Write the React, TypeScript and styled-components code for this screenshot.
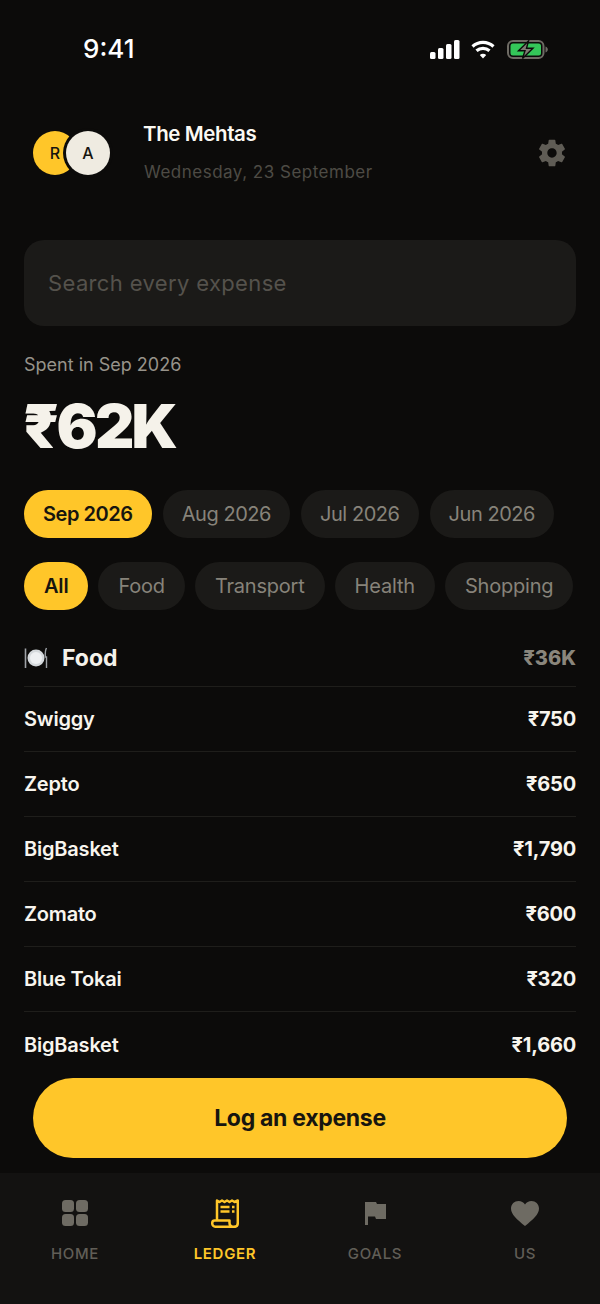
import React from "react";
import styled, { createGlobalStyle } from "styled-components";

const Global = createGlobalStyle`
  html, body { margin: 0; padding: 0; background: #0c0b0a; }
  * { box-sizing: border-box; }
`;

const Screen = styled.div`
  position: relative;
  width: 600px;
  height: 1304px;
  overflow: hidden;
  background: #0c0b0a;
  color: #f5f2ea;
  font-family: Inter, "Liberation Sans", sans-serif;
  display: flex;
  flex-direction: column;
`;

const StatusBar = styled.div`
  height: 96px;
  flex: none;
  display: flex;
  justify-content: space-between;
  padding: 34px 52px 0 83px;
`;

const Clock = styled.div`
  font-size: 26px;
  line-height: 30px;
  font-weight: 500;
  color: #fff;
`;

const StatusIcons = styled.div`
  display: flex;
  align-items: center;
  height: 30px;
`;

const Header = styled.header`
  flex: none;
  height: 114px;
  padding: 24px 32px 0 33px;
  display: flex;
  align-items: flex-start;
`;

const Avatars = styled.div`
  display: flex;
  width: 77px;
  padding-top: 11px;
  margin-right: 34px;
`;

const Avatar = styled.div<{ $bg: string; $over?: boolean }>`
  width: 44px;
  height: 44px;
  border-radius: 50%;
  background: ${(p) => p.$bg};
  color: #17150f;
  font-size: 16px;
  font-weight: 500;
  display: flex;
  align-items: center;
  justify-content: center;
  ${(p) => (p.$over ? "margin-left: -11px; box-shadow: 0 0 0 3px #0c0b0a; position: relative;" : "")}
`;

const Who = styled.div`
  flex: 1;
`;

const Name = styled.div`
  font-size: 20.5px;
  line-height: 28px;
  font-weight: 600;
  letter-spacing: -0.4px;
  color: #fbf9f3;
  margin-left: -1px;
`;

const DateLine = styled.div`
  margin-top: 12px;
  font-size: 17px;
  line-height: 24px;
  letter-spacing: 0.5px;
  color: #4e4b45;
`;

const Gear = styled.div`
  padding-top: 16.5px;
`;

const Body = styled.main`
  flex: 1;
  min-height: 0;
  padding: 0 24px;
  overflow: hidden;
`;

const Search = styled.div`
  margin-top: 30px;
  height: 86px;
  border-radius: 20px;
  background: #1b1a18;
  display: flex;
  align-items: center;
  padding: 0 24px;
  font-size: 22px;
  letter-spacing: 0.36px;
  color: #55524c;
`;

const SpentLabel = styled.div`
  margin-top: 26px;
  font-size: 18px;
  line-height: 26px;
  color: #97938a;
`;

const Total = styled.div`
  margin: 12px 0 0 -1px;
  font-size: 61px;
  line-height: 72px;
  font-weight: 900;
  letter-spacing: -2.8px;
  color: #f5f2ea;
`;

const Chips = styled.div<{ $gap: number }>`
  display: flex;
  gap: ${(p) => p.$gap}px;
  margin-top: 28px;
  & + & {
    margin-top: 24px;
  }
`;

const Chip = styled.div<{ $active?: boolean }>`
  flex: none;
  height: 48px;
  padding: 0 19px;
  border-radius: 24px;
  display: flex;
  align-items: center;
  font-size: 20px;
  font-weight: ${(p) => (p.$active ? 600 : 400)};
  letter-spacing: -0.45px;
  background: ${(p) => (p.$active ? "#ffc629" : "#1b1a18")};
  color: ${(p) => (p.$active ? "#17150f" : "#87837a")};
`;

const CategoryChip = styled(Chip)`
  padding: 0 20px;
  letter-spacing: -0.2px;
`;

const Section = styled.div`
  margin-top: 20px;
  height: 57px;
  display: flex;
  align-items: center;
  justify-content: space-between;
  border-bottom: 1px solid #1f1e1b;
`;

const SectionName = styled.div`
  display: flex;
  align-items: center;
  gap: 14px;
  font-size: 23px;
  font-weight: 700;
`;

const SectionTotal = styled.div`
  font-size: 20px;
  font-weight: 800;
  color: #8a867c;
`;

const Row = styled.div`
  height: 65px;
  display: flex;
  align-items: center;
  justify-content: space-between;
  border-bottom: 1px solid #1f1e1b;
  font-size: 20px;
  font-weight: 600;
  letter-spacing: -0.2px;
  color: #f8f5ee;
  &:last-child {
    border-bottom: 0;
  }
`;

const Amount = styled.div`
  font-weight: 700;
`;

const Cta = styled.button`
  position: absolute;
  left: 33px;
  top: 1078px;
  width: 534px;
  height: 80px;
  border: 0;
  border-radius: 40px;
  background: #ffc629;
  color: #17150f;
  font-family: inherit;
  font-size: 23px;
  font-weight: 700;
  letter-spacing: -0.3px;
`;

const Tabs = styled.nav`
  flex: none;
  height: 131px;
  background: #131211;
  display: grid;
  grid-template-columns: repeat(4, 150px);
  position: relative;
`;

const Tab = styled.div<{ $active?: boolean }>`
  display: flex;
  flex-direction: column;
  align-items: center;
  padding-top: 25px;
  gap: 16px;
  font-size: 15px;
  line-height: 20px;
  font-weight: ${(p) => (p.$active ? 600 : 500)};
  letter-spacing: 0.7px;
  color: ${(p) => (p.$active ? "#ffc629" : "#615e57")};
`;

const TabIcon = styled.div`
  height: 30px;
  display: flex;
  align-items: center;
  justify-content: center;
`;

const SignalIcon = () => (
  <svg width="30" height="19" viewBox="0 0 30 19" fill="#fff">
    <rect x="0" y="12" width="5.5" height="7" rx="1.5" />
    <rect x="8" y="8" width="5.5" height="11" rx="1.5" />
    <rect x="16" y="4" width="5.5" height="15" rx="1.5" />
    <rect x="24" y="0" width="5.5" height="19" rx="1.5" />
  </svg>
);

const WifiIcon = () => (
  <svg width="24" height="19" viewBox="0 0 24 19" fill="none" stroke="#fff" strokeWidth="3.2" style={{ margin: "0 12px 0 11px" }}>
    <path d="M1.5 6.5C7.5 1 16.5 1 22.5 6.5" />
    <path d="M5.5 10.8C9.2 7.5 14.8 7.5 18.5 10.8" />
    <path d="M12 18.5 8.8 15c1.9-1.6 4.500-1.600 6.400 0Z" fill="#fff" stroke="none" />
  </svg>
);

const BatteryIcon = () => (
  <svg width="41" height="19" viewBox="0 0 41 19" fill="none">
    <rect x="1" y="1" width="35.500" height="17" rx="5" stroke="#6e6b64" strokeWidth="2" />
    <rect x="3.500" y="3.500" width="30.500" height="12" rx="2.500" fill="#34c759" />
    <path d="M38.500 6.500v6c1.500-.5 2.300-1.700 2.300-3s-.8-2.500-2.300-3Z" fill="#6e6b64" />
    <path d="M21.500 1 11.500 10.800h6.500L15.500 18.500 26 8.200h-6.500Z" fill="#7d7a72" stroke="#0c0b0a" strokeWidth="1.400" />
  </svg>
);

const GearIcon = () => (
  <svg width="32" height="32" viewBox="0 0 24 24" fill="#5f5c55">
    <path d="M19.43 12.98c.04-.32.07-.64.07-.98s-.03-.66-.07-.98l2.110-1.650c.19-.15.24-.42.12-.64l-2-3.460c-.12-.22-.39-.3-.61-.22l-2.490 1c-.52-.4-1.080-.73-1.690-.98l-.38-2.650A.488.488 0 0 0 14 2h-4c-.25 0-.46.18-.49.42l-.38 2.650c-.61.25-1.170.59-1.690.98l-2.490-1c-.23-.09-.49 0-.61.22l-2 3.460c-.13.22-.07.49.12.64l2.110 1.650c-.04.32-.07.65-.07.98s.03.66.07.98l-2.110 1.650c-.19.15-.24.42-.12.64l2 3.460c.12.22.39.3.61.22l2.490-1c.52.4 1.080.73 1.690.98l.38 2.650c.03.24.24.42.49.42h4c.25 0 .46-.18.49-.42l.38-2.650c.61-.25 1.170-.59 1.690-.98l2.490 1c.23.09.49 0 .61-.22l2-3.460c.12-.22.07-.49-.12-.64l-2.110-1.650ZM12 15.500c-1.930 0-3.500-1.570-3.500-3.500s1.570-3.500 3.500-3.500 3.500 1.570 3.500 3.500-1.570 3.500-3.500 3.500Z" />
  </svg>
);

const PlateIcon = () => (
  <svg width="24" height="22" viewBox="0 0 24 22">
    <circle cx="12" cy="11" r="8.500" fill="#d5d9dc" />
    <circle cx="12" cy="11" r="6" fill="#eef0f2" />
    <path d="M1.500 1.500v19.500" stroke="#9ea2a6" strokeWidth="1.600" />
    <path d="M22.500 1c-1.200 2-1.400 5-1.200 9h1.200v11" stroke="#9ea2a6" strokeWidth="1.400" fill="none" />
  </svg>
);

const HomeIcon = () => (
  <svg width="26" height="26" viewBox="0 0 26 26" fill="#6e6b63">
    <rect x="0" y="0" width="12" height="12" rx="3.500" />
    <rect x="14" y="0" width="12" height="12" rx="3.500" />
    <rect x="0" y="14" width="12" height="12" rx="3.500" />
    <rect x="14" y="14" width="12" height="12" rx="3.500" />
  </svg>
);

const LedgerIcon = () => (
  <svg width="28" height="30" viewBox="0 0 28 30" fill="none" stroke="#ffc629" strokeWidth="2.500" strokeLinejoin="round">
    <path d="M6 22V2.500l2.500 1.500L11 2.500 13.500 4 16 2.500 18.500 4 21 2.500 23.500 4 26.800 2.500V25c0 2.500-1.600 3.800-3.400 3.800" />
    <path d="M3.500 22.500H18.500V25c0 2.500 2 3.800 4.900 3.800H5c-2.200 0-3.800-1.400-3.800-3.500 0-1.600 1-2.800 2.300-2.800Z" />
    <path d="M9.500 9h9M9.500 13.500h9M21 9h2.500M21 13.500h2.500" strokeWidth="2.400" />
  </svg>
);

const FlagIcon = () => (
  <svg width="21" height="23" viewBox="0 0 21 23" fill="#6e6b63">
    <path d="M0 0h11l1 2h9v15H11l-1-2.500H3V23H0Z" />
  </svg>
);

const HeartIcon = () => (
  <svg width="28" height="25" viewBox="0 0 28 25" fill="#6e6b63">
    <path d="M14 25C6 18.500 0 13.500 0 7.500 0 3 3.500 0 7.500 0 10.200 0 12.700 1.300 14 3.600 15.300 1.300 17.800 0 20.500 0 24.500 0 28 3 28 7.500c0 6-6 11-14 17.500Z" />
  </svg>
);

const expenses = [
  { name: "Swiggy", amount: "₹750" },
  { name: "Zepto", amount: "₹650" },
  { name: "BigBasket", amount: "₹1,790" },
  { name: "Zomato", amount: "₹600" },
  { name: "Blue Tokai", amount: "₹320" },
  { name: "BigBasket", amount: "₹1,660" },
];

const months = ["Sep 2026", "Aug 2026", "Jul 2026", "Jun 2026"];
const categories = ["All", "Food", "Transport", "Health", "Shopping"];

const App = () => {
  return (
    <Screen>
      <Global />
      <StatusBar>
        <Clock>9:41</Clock>
        <StatusIcons>
          <SignalIcon />
          <WifiIcon />
          <BatteryIcon />
        </StatusIcons>
      </StatusBar>
      <Header>
        <Avatars>
          <Avatar $bg="#ffc629">R</Avatar>
          <Avatar $bg="#efebe1" $over>A</Avatar>
        </Avatars>
        <Who>
          <Name>The Mehtas</Name>
          <DateLine>Wednesday, 23 September</DateLine>
        </Who>
        <Gear><GearIcon /></Gear>
      </Header>
      <Body>
        <Search>Search every expense</Search>
        <SpentLabel>Spent in Sep 2026</SpentLabel>
        <Total>₹62K</Total>
        <Chips $gap={11}>
          {months.map((m, i) => <Chip key={m} $active={i === 0}>{m}</Chip>)}
        </Chips>
        <Chips $gap={10}>
          {categories.map((c, i) => <CategoryChip key={c} $active={i === 0}>{c}</CategoryChip>)}
        </Chips>
        <Section>
          <SectionName><PlateIcon />Food</SectionName>
          <SectionTotal>₹36K</SectionTotal>
        </Section>
        {expenses.map((e, i) => (
          <Row key={i}>
            <span>{e.name}</span>
            <Amount>{e.amount}</Amount>
          </Row>
        ))}
      </Body>
      <Cta>Log an expense</Cta>
      <Tabs>
        <Tab><TabIcon><HomeIcon /></TabIcon>HOME</Tab>
        <Tab $active><TabIcon><LedgerIcon /></TabIcon>LEDGER</Tab>
        <Tab><TabIcon><FlagIcon /></TabIcon>GOALS</Tab>
        <Tab><TabIcon><HeartIcon /></TabIcon>US</Tab>
      </Tabs>
    </Screen>
  );
};

export default App;
